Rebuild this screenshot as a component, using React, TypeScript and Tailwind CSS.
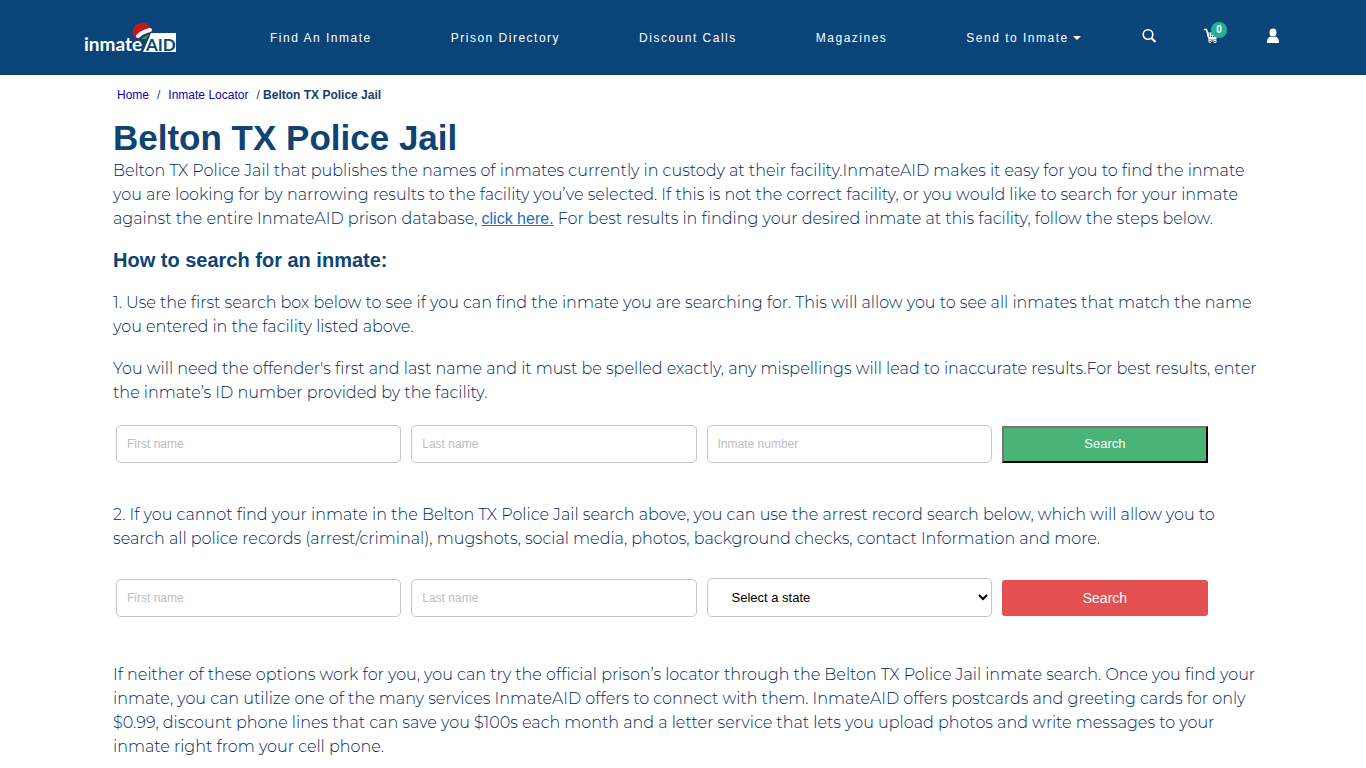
import React, { useState } from "react";

const NAV = ["Find An Inmate", "Prison Directory", "Discount Calls", "Magazines"];

const STATES = ["Alabama", "Arizona", "California", "Florida", "New York", "Texas"];

const COPY = "-mr-3 font-[Montserrat,Inter,sans-serif] font-light text-base leading-6 text-[#002a5c]";

const HEADING = "font-bold text-[#0f4374]";

const FIELD =
  "h-[38px] w-full min-w-0 rounded-[5px] border border-[#c6c6c6] bg-white px-[10px] text-xs text-black placeholder:text-[#bdbdbd]";

const ROW = "grid grid-cols-[285fr_285fr_285fr_206fr] items-center gap-[10px] pl-[3px] pr-[45px]";

const Logo = () => (
  <svg viewBox="0 0 92 34" className="h-[34px] w-[92px]" role="img" aria-label="inmateAID">
    <path d="M68 12 H92 V31 H61 Z" fill="#fff" />
    <path d="M59 31 L67 12 H71 L74 31 Z" fill="#fff" />
    <text x="0" y="30" fontSize="19" fontWeight="700" fill="#fff" fontFamily="Lato, sans-serif">
      inmate
    </text>
    <text x="62" y="30" fontSize="17" fontWeight="700" fill="#0a4478" fontFamily="Lato, sans-serif">
      AID
    </text>
    <path d="M52 18 C46 12 49 3 57 2 C62 1 66 4 67 9 L64 12 L55 16 Z" fill="#c5161d" />
    <path d="M54 15 Q58 11 66 9" stroke="#fff" strokeWidth="4" strokeLinecap="round" fill="none" />
    <path d="M57 18 L65 13 L62 18 Z" fill="#4c9a3f" />
  </svg>
);

const SearchIcon = () => (
  <svg viewBox="0 0 16 16" className="h-4 w-4" fill="none" stroke="#fff" strokeWidth="1.600">
    <circle cx="7" cy="6.500" r="4.800" />
    <path d="M10.500 10 L14.500 14" strokeWidth="2.200" />
  </svg>
);

const CartIcon = () => (
  <svg viewBox="0 0 16 16" className="h-4 w-4" fill="none" stroke="#fff">
    <path d="M1 1.500 H3.500 L6 10.500 H13.500" strokeWidth="1.500" />
    <path d="M4.500 5 H14 L13 9.500 H5.500 Z" strokeWidth="1.200" />
    <path d="M7.500 5 V9.500 M9.700 5 V9.500 M11.800 5 V9.500 M5 7.200 H13.500" />
    <path d="M5 12 H13.500" />
    <circle cx="7" cy="13.500" r="1.200" />
    <circle cx="12" cy="13.500" r="1.200" />
  </svg>
);

const UserIcon = () => (
  <svg viewBox="0 0 16 16" className="h-4 w-4" fill="#fff">
    <ellipse cx="8" cy="4.500" rx="3.500" ry="4" />
    <path d="M2 15 C2 10 4 9 5.800 8.600 Q8 10 10.200 8.600 C12 9 14 10 14 15 Z" />
  </svg>
);

const Header = () => (
  <header className="flex h-[75px] items-center bg-[#0a4478] pl-[84px] pr-[85px] text-white">
    <a href="#home" className="shrink-0">
      <Logo />
    </a>
    <nav className="ml-[94px] flex gap-[79px] whitespace-nowrap text-xs tracking-[0.125em]">
      {NAV.map((item) => (
        <a key={item} href="#nav">
          {item}
        </a>
      ))}
      <button type="button" className="flex items-center gap-1 tracking-[0.125em]">
        Send to Inmate
        <span className="border-x-4 border-t-4 border-x-transparent border-t-white" />
      </button>
    </nav>
    <div className="ml-auto flex items-center gap-[46px] pb-1">
      <button type="button" aria-label="Search">
        <SearchIcon />
      </button>
      <a href="#cart" aria-label="Cart" className="relative">
        <CartIcon />
        <span className="absolute -top-[6px] left-2 flex h-4 w-4 items-center justify-center rounded-full bg-[#1fb496] text-[10px] font-bold">
          0
        </span>
      </a>
      <a href="#account" aria-label="Account">
        <UserIcon />
      </a>
    </div>
  </header>
);

export default function App() {
  const [state, setState] = useState("");

  return (
    <div className="bg-white font-['Liberation_Sans',Arial,sans-serif] text-[#143f6b]">
      <Header />
      <main className="mx-auto max-w-[1140px]">
        <nav aria-label="Breadcrumb" className="flex gap-2 px-1 pt-3 text-xs leading-4">
          <a href="#home" className="text-[#1200b4]">Home</a>
          <span>/</span>
          <a href="#locator" className="text-[#1200b4]">Inmate Locator</a>
          <span>
            / <b className="font-bold">Belton TX Police Jail</b>
          </span>
        </nav>

        <h1 className={`mt-[15px] mb-px text-[35px] leading-10 ${HEADING}`}>Belton TX Police Jail</h1>
        <p className={COPY}>
          Belton TX Police Jail that publishes the names of inmates currently in custody at their facility.InmateAID
          makes it easy for you to find the inmate you are looking for by narrowing results to the facility you’ve
          selected. If this is not the correct facility, or you would like to search for your inmate against the entire
          InmateAID prison database,{" "}
          <a
            href="#search"
            className="font-['Liberation_Sans',Arial,sans-serif] font-normal text-[#1a6fb8] underline decoration-1"
          >
            click here.
          </a>{" "}
          For best results in finding your desired inmate at this facility, follow the steps below.
        </p>

        <h2 className={`mt-[17px] text-xl leading-6 ${HEADING}`}>How to search for an inmate:</h2>
        <p className={`mt-[19px] ${COPY}`}>
          1. Use the first search box below to see if you can find the inmate you are searching for. This will allow you
          to see all inmates that match the name you entered in the facility listed above.
        </p>
        <p className={`mt-[18px] ${COPY}`}>
          You will need the offender's first and last name and it must be spelled exactly, any mispellings will lead to
          inaccurate results.For best results, enter the inmate’s ID number provided by the facility.
        </p>

        <form className={`mt-5 ${ROW}`} onSubmit={(e) => e.preventDefault()}>
          <input className={FIELD} aria-label="First name" placeholder="First name" />
          <input className={FIELD} aria-label="Last name" placeholder="Last name" />
          <input className={FIELD} aria-label="Inmate number" placeholder="Inmate number" />
          <button
            type="submit"
            className="h-[37px] border-2 border-b-black border-l-[#767676] border-r-black border-t-[#767676] bg-[#4ab477] text-[13px] text-white"
          >
            Search
          </button>
        </form>

        <p className={`mt-10 ${COPY}`}>
          2. If you cannot find your inmate in the Belton TX Police Jail search above, you can use the arrest record
          search below, which will allow you to search all police records (arrest/criminal), mugshots, social media,
          photos, background checks, contact Information and more.
        </p>

        <form className={`mt-[27px] ${ROW}`} onSubmit={(e) => e.preventDefault()}>
          <input className={FIELD} aria-label="First name" placeholder="First name" />
          <input className={FIELD} aria-label="Last name" placeholder="Last name" />
          <select
            aria-label="State"
            value={state}
            onChange={(e) => setState(e.target.value)}
            className="h-[39px] w-full min-w-0 rounded-[5px] border border-[#c6c6c6] bg-white pl-5 text-[13px] text-black"
          >
            <option value="">Select a state</option>
            {STATES.map((s) => (
              <option key={s} value={s}>
                {s}
              </option>
            ))}
          </select>
          <button type="submit" className="h-9 rounded-[3px] bg-[#e44f4f] text-sm text-white">
            Search
          </button>
        </form>

        <p className={`mt-[46px] ${COPY}`}>
          If neither of these options work for you, you can try the official prison’s locator through the Belton TX
          Police Jail inmate search. Once you find your inmate, you can utilize one of the many services InmateAID
          offers to connect with them. InmateAID offers postcards and greeting cards for only $0.99, discount phone
          lines that can save you $100s each month and a letter service that lets you upload photos and write messages
          to your inmate right from your cell phone.
        </p>
      </main>
    </div>
  );
}
